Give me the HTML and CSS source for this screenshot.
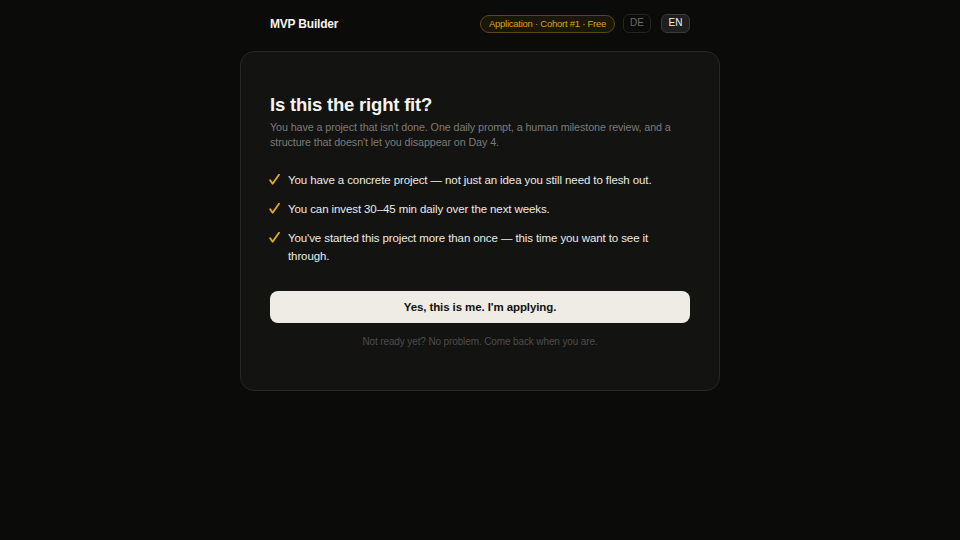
FILE: index.html
```html
<!DOCTYPE html>
<html lang="en">
<head>
<meta charset="utf-8">
<title>MVP Builder</title>
<link rel="stylesheet" href="styles.css">
</head>
<body>
<div class="page">
  <header class="topbar">
    <div class="brand">MVP Builder</div>
    <div class="top-right">
      <span class="badge">Application · Cohort #1 · Free</span>
      <button class="lang">DE</button>
      <button class="lang active">EN</button>
    </div>
  </header>
  <main class="card">
    <h1 class="title">Is this the right fit?</h1>
    <p class="lead">You have a project that isn't done. One daily prompt, a human milestone review, and a structure that doesn't let you disappear on Day 4.</p>
    <ul class="checks">
      <li><svg class="tick" viewBox="0 0 11 11" width="11" height="11"><path d="M1.2 6.2 L3.6 9.8 L10 0.8" fill="none" stroke="#e2a718" stroke-width="1.9" stroke-linecap="round" stroke-linejoin="round"/></svg><span>You have a concrete project — not just an idea you still need to flesh out.</span></li>
      <li><svg class="tick" viewBox="0 0 11 11" width="11" height="11"><path d="M1.2 6.2 L3.6 9.8 L10 0.8" fill="none" stroke="#e2a718" stroke-width="1.9" stroke-linecap="round" stroke-linejoin="round"/></svg><span>You can invest 30–45 min daily over the next weeks.</span></li>
      <li><svg class="tick" viewBox="0 0 11 11" width="11" height="11"><path d="M1.2 6.2 L3.6 9.8 L10 0.8" fill="none" stroke="#e2a718" stroke-width="1.9" stroke-linecap="round" stroke-linejoin="round"/></svg><span>You've started this project more than once — this time you want to see it through.</span></li>
    </ul>
    <button class="cta">Yes, this is me. I'm applying.</button>
    <p class="later">Not ready yet? No problem. Come back when you are.</p>
  </main>
</div>
</body>
</html>
```
FILE: styles.css
```css
* { box-sizing: border-box; }
html, body { margin: 0; padding: 0; }
body {
  background: #0b0b0a;
  font-family: "Liberation Sans", Arial, sans-serif;
  color: #f2f0ea;
  min-height: 540px;
}
.page {
  width: 480px;
  margin: 0 auto;
  padding-top: 14px;
}
.topbar {
  display: flex;
  align-items: center;
  justify-content: space-between;
  padding: 0 30px;
  height: 19px;
}
.brand {
  font-weight: 700;
  font-size: 12px;
  letter-spacing: -0.2px;
  color: #f5f3ee;
}
.top-right {
  display: flex;
  align-items: center;
  gap: 9px;
}
.badge {
  font-size: 9.5px;
  letter-spacing: -0.25px;
  color: #d4a21e;
  border: 1px solid #5e4915;
  background: #1b160a;
  border-radius: 999px;
  padding: 3px 8px;
  line-height: 10px;
  margin-top: 1px;
}
.lang {
  font-family: inherit;
  font-size: 10px;
  line-height: 10px;
  padding: 3px 6px 4px;
  width: 28px;
  border-radius: 6px;
  border: 1px solid #242422;
  background: transparent;
  color: #6a6a66;
  margin-left: -1px;
}
.lang.active {
  width: 29px;
  background: #1f1f1e;
  border-color: #3a3a38;
  color: #f2f0ea;
  margin-left: 1px;
}
.card {
  margin-top: 18px;
  background: #131312;
  border: 1px solid #262624;
  border-radius: 14px;
  padding: 41px 29px 42px;
}
.title {
  margin: 0;
  font-size: 18.5px;
  letter-spacing: -0.2px;
  line-height: 24px;
  font-weight: 700;
  color: #f5f3ee;
}
.lead {
  margin: 3px 0 0;
  font-size: 10.75px;
  letter-spacing: -0.1px;
  line-height: 15px;
  color: #7c7b76;
}
.checks {
  list-style: none;
  margin: 21px 0 0;
  padding: 0;
  display: flex;
  flex-direction: column;
  gap: 11px;
}
.checks li {
  display: flex;
  align-items: flex-start;
  gap: 8px;
  font-size: 11.5px;
  letter-spacing: -0.1px;
  line-height: 18px;
  color: #ecebe6;
}
.tick {
  flex: none;
  width: 11px;
  height: 11px;
  margin-top: 3px;
  margin-left: -1px;
}
.cta {
  display: block;
  width: 100%;
  margin-top: 26px;
  height: 32px;
  border: none;
  border-radius: 8px;
  background: #efece5;
  color: #111;
  font-family: inherit;
  font-weight: 700;
  font-size: 11.5px;
  letter-spacing: -0.1px;
}
.later {
  margin: 13px 0 0;
  text-align: center;
  font-size: 10px;
  letter-spacing: -0.12px;
  line-height: 12px;
  color: #4e4d4a;
}
```
